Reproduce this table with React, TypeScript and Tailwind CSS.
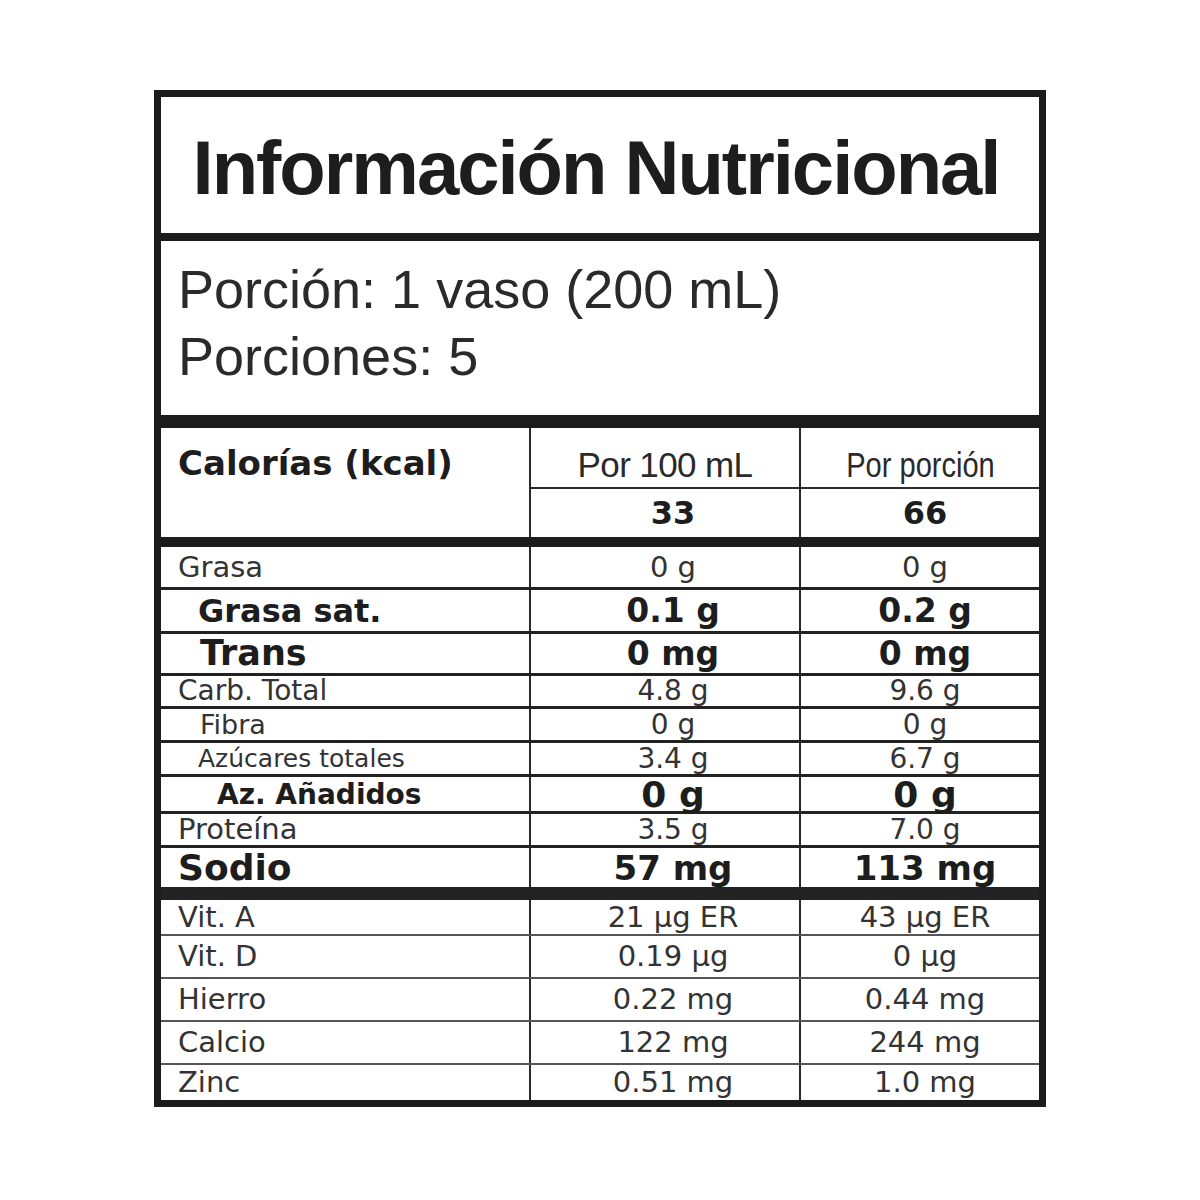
import React from "react";

const dv = "font-['DejaVu_Sans',Verdana,sans-serif]";
const lib = "font-['Liberation_Sans',Arial,sans-serif]";
const cols = "grid grid-cols-[370px_270px_1fr]";

type Row = { label: string; a: string; b: string; h: string; lab: string; val: string; line: string };

const nutrients: Row[] = [
  { label: "Grasa", a: "0 g", b: "0 g", h: "h-[43px]", lab: "pl-[17px] text-[29px] text-[#333]", val: "text-[29px] text-[#333]", line: "border-b-[3px]" },
  { label: "Grasa sat.", a: "0.1 g", b: "0.2 g", h: "h-[44px]", lab: "pl-[37px] text-[32px] font-bold text-[#1d1d1d]", val: "text-[33px] font-bold text-[#1d1d1d]", line: "border-b-[3px]" },
  { label: "Trans", a: "0 mg", b: "0 mg", h: "h-[42px]", lab: "pl-[39px] text-[35px] font-bold text-[#1d1d1d]", val: "text-[33px] font-bold text-[#1d1d1d]", line: "border-b-[3px]" },
  { label: "Carb. Total", a: "4.8 g", b: "9.6 g", h: "h-[33px]", lab: "pl-[17px] text-[28px] text-[#333]", val: "text-[28px] text-[#333]", line: "border-b-[3px]" },
  { label: "Fibra", a: "0 g", b: "0 g", h: "h-[34px]", lab: "pl-[39px] text-[27px] text-[#333]", val: "text-[28px] text-[#333]", line: "border-b-[3px]" },
  { label: "Azúcares totales", a: "3.4 g", b: "6.7 g", h: "h-[34px]", lab: "pl-[37px] text-[25px] text-[#333]", val: "text-[28px] text-[#333]", line: "border-b-[3px]" },
  { label: "Az. Añadidos", a: "0 g", b: "0 g", h: "h-[37px]", lab: "pl-[56px] text-[28px] font-bold text-[#1d1d1d]", val: "text-[36px] font-bold text-[#1d1d1d]", line: "border-b-[3px]" },
  { label: "Proteína", a: "3.5 g", b: "7.0 g", h: "h-[34px]", lab: "pl-[17px] text-[29px] text-[#333]", val: "text-[28px] text-[#333]", line: "border-b-[3px]" },
  { label: "Sodio", a: "57 mg", b: "113 mg", h: "h-[52px]", lab: "pl-[17px] text-[36px] font-bold text-[#1d1d1d]", val: "text-[34px] font-bold text-[#1d1d1d]", line: "border-b-[13px]" },
];

const vitamins: Row[] = [
  { label: "Vit. A", a: "21 µg ER", b: "43 µg ER", h: "h-[36px]", lab: "pl-[17px] text-[29px] text-[#333]", val: "text-[29px] text-[#333]", line: "border-b-2" },
  { label: "Vit. D", a: "0.19 µg", b: "0 µg", h: "h-[43px]", lab: "pl-[17px] text-[29px] text-[#333]", val: "text-[29px] text-[#333]", line: "border-b-2" },
  { label: "Hierro", a: "0.22 mg", b: "0.44 mg", h: "h-[43px]", lab: "pl-[17px] text-[29px] text-[#333]", val: "text-[29px] text-[#333]", line: "border-b-2" },
  { label: "Calcio", a: "122 mg", b: "244 mg", h: "h-[43px]", lab: "pl-[17px] text-[29px] text-[#333]", val: "text-[29px] text-[#333]", line: "border-b-2" },
  { label: "Zinc", a: "0.51 mg", b: "1.0 mg", h: "h-[35px]", lab: "pl-[17px] text-[29px] text-[#333]", val: "text-[29px] text-[#333]", line: "border-b-0" },
];

function NutrientRow({ r }: { r: Row }) {
  return (
    <div className={`${cols} ${r.h} ${r.line} border-[#222] ${dv} leading-none`}>
      <div className={`flex items-center border-r-2 border-[#2a2a2a] whitespace-nowrap ${r.lab}`}>{r.label}</div>
      <div className={`flex items-center justify-center pl-[16px] border-r-2 border-[#2a2a2a] whitespace-nowrap ${r.val}`}>{r.a}</div>
      <div className={`flex items-center justify-center pl-[10px] whitespace-nowrap ${r.val}`}>{r.b}</div>
    </div>
  );
}

export default function App() {
  return (
    <div className="w-[1200px] h-[1200px] bg-white pt-[90px] pl-[154px]">
      <div className="w-[892px] border-[7px] border-[#1c1c1c] bg-white">
        <div className={`h-[144px] border-b-[8px] border-[#1c1c1c] flex items-center justify-center pt-[6px] pr-[8px] ${lib} text-[76px] font-bold tracking-[-2px] text-[#1d1d1d] leading-none`}>
          Información Nutricional
        </div>

        <div className={`h-[187px] border-b-[13px] border-[#1c1c1c] pt-[15px] pl-[17px] ${lib} text-[54px] leading-[67px] text-[#2a2a2a]`}>
          <div>Porción: 1 vaso (200 mL)</div>
          <div>Porciones: 5</div>
        </div>

        <div className={`${cols} h-[119px] border-b-[10px] border-[#1c1c1c]`}>
          <div className={`border-r-2 border-[#2a2a2a] pt-[18px] pl-[17px] ${dv} text-[34px] font-bold leading-none text-[#1d1d1d] whitespace-nowrap`}>
            Calorías (kcal)
          </div>
          <div className="col-span-2 flex flex-col">
            <div className={`h-[61px] border-b-2 border-[#2a2a2a] grid grid-cols-[270px_1fr] ${lib} text-[35px] leading-none text-[#2a2a2a]`}>
              <div className="border-r-2 border-[#2a2a2a] flex justify-center pt-[19px] tracking-[-0.6px]">Por 100 mL</div>
              <div className="flex justify-center pt-[19px]">
                <span className="inline-block scale-x-[0.83] whitespace-nowrap">Por porción</span>
              </div>
            </div>
            <div className={`flex-1 grid grid-cols-[270px_1fr] ${dv} text-[32px] font-bold leading-none text-[#1d1d1d]`}>
              <div className="border-r-2 border-[#2a2a2a] flex items-center justify-center pl-[16px]">33</div>
              <div className="flex items-center justify-center pl-[10px]">66</div>
            </div>
          </div>
        </div>

        {nutrients.map((r) => (
          <NutrientRow key={r.label} r={r} />
        ))}
        {vitamins.map((r) => (
          <NutrientRow key={r.label} r={{ ...r, line: `${r.line} border-[#555]` }} />
        ))}
      </div>
    </div>
  );
}
